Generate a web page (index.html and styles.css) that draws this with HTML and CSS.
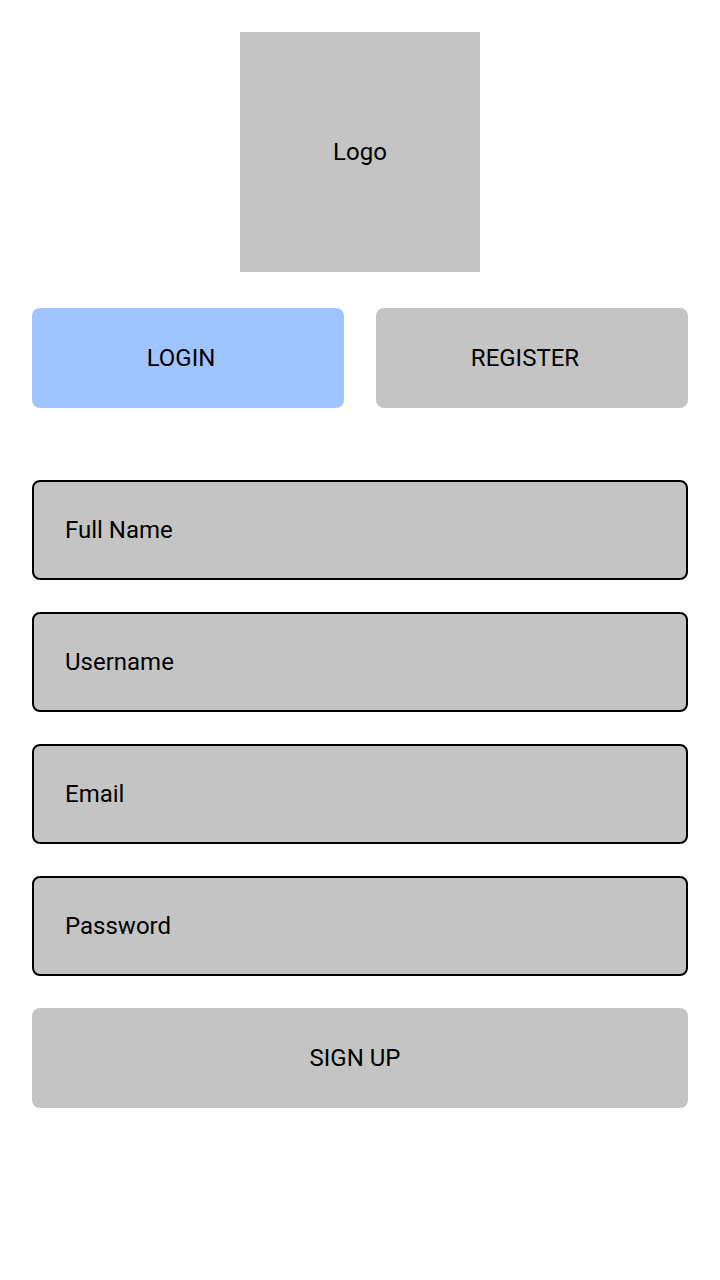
FILE: index.html
```html
<!DOCTYPE html>
<html>
<head>
<meta charset="utf-8">
<link rel="stylesheet" href="styles.css">
</head>
<body>
<div class="page">
  <div class="logo">Logo</div>
  <div class="tabs">
    <div class="tab tab-active">LOGIN</div>
    <div class="tab">REGISTER</div>
  </div>
  <div class="form">
    <div class="field">Full Name</div>
    <div class="field">Username</div>
    <div class="field">Email</div>
    <div class="field">Password</div>
    <div class="submit">SIGN UP</div>
  </div>
</div>
</body>
</html>
```

FILE: styles.css
```css
html, body {
  margin: 0;
  padding: 0;
  background: #ffffff;
}
.page {
  width: 720px;
  height: 1280px;
  box-sizing: border-box;
  padding: 32px;
  display: flex;
  flex-direction: column;
  align-items: center;
  font-family: Roboto, "Liberation Sans", sans-serif;
  font-size: 24px;
  color: #000;
}
.logo {
  width: 240px;
  height: 240px;
  background: #c4c4c4;
  display: flex;
  align-items: center;
  justify-content: center;
}
.tabs {
  margin-top: 36px;
  width: 100%;
  display: flex;
  gap: 32px;
}
.tab {
  flex: 1;
  height: 100px;
  border-radius: 8px;
  background: #c4c4c4;
  display: flex;
  align-items: center;
  justify-content: center;
  padding-right: 14px;
}
.tab-active {
  background: #a0c4ff;
}
.form {
  margin-top: 72px;
  width: 100%;
  display: flex;
  flex-direction: column;
  gap: 32px;
}
.field {
  height: 100px;
  box-sizing: border-box;
  border: 2px solid #000;
  border-radius: 8px;
  background: #c4c4c4;
  display: flex;
  align-items: center;
  padding-left: 31px;
}
.submit {
  height: 100px;
  border-radius: 8px;
  background: #c4c4c4;
  display: flex;
  align-items: center;
  justify-content: center;
  padding-right: 10px;
}
```
